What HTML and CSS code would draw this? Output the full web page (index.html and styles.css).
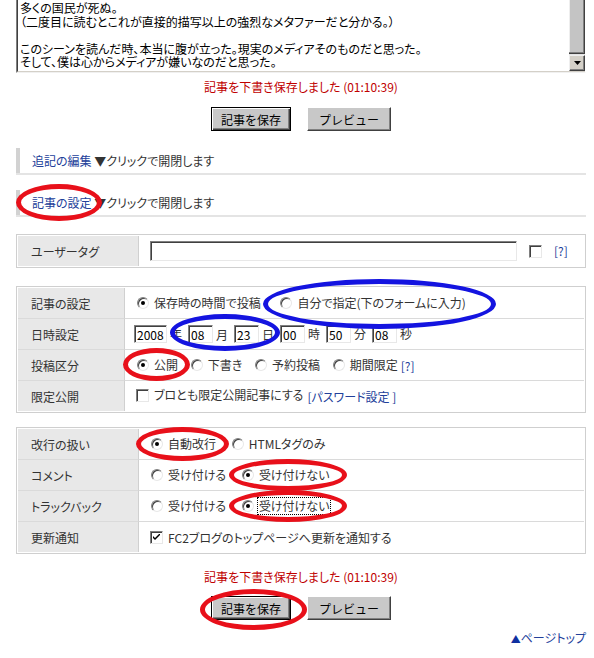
FILE: index.html
```html
<!DOCTYPE html>
<html lang="ja">

<head>
    <meta charset="UTF-8">
    <title>記事の編集</title>
    <link rel="stylesheet" href="styles.css">
</head>

<body>
    <div class="page">
        <!-- 本文エリア（スクロール済み） -->
        <div class="editor">
            <div class="editor-body">
                多くの国民が死ぬ。<br>
                （二度目に読むとこれが直接的描写以上の強烈なメタファーだと分かる。）<br>
                <br>
                このシーンを読んだ時、本当に腹が立った。現実のメディアそのものだと思った。<br>
                そして、僕は心からメディアが嫌いなのだと思った。
            </div>
            <div class="scrollbar">
                <div class="scroll-thumb"></div>
                <div class="scroll-down">
                    <svg width="7" height="4" viewBox="0 0 7 4"><path d="M0 0h7L3.5 4z" fill="#000"/></svg>
                </div>
            </div>
        </div>

        <p class="notice">記事を下書き保存しました (01:10:39)</p>
        <div class="actions">
            <button class="btn btn-default">記事を保存</button>
            <button class="btn btn-preview">プレビュー</button>
        </div>

        <!-- 開閉パネル -->
        <div class="fold">
            <div class="fold-title"><a class="link">追記の編集</a> ▼クリックで開閉します</div>
        </div>
        <div class="fold fold-second">
            <div class="fold-title"><span class="mark"><a class="link">記事の設定</a><span class="ring ring-head"></span></span> ▼クリックで開閉します</div>
        </div>

        <!-- ユーザータグ -->
        <table class="form-table">
            <tr>
                <th class="wide">ユーザータグ</th>
                <td>
                    <div class="cell-row">
                        <input class="text-in tag-in" type="text">
                        <span class="check"></span>
                        <a class="link help">[?]</a>
                    </div>
                </td>
            </tr>
        </table>

        <!-- 投稿日時 -->
        <table class="form-table table-date">
            <tr>
                <th class="narrow">記事の設定</th>
                <td>
                    <span class="opt opt-wide"><span class="radio on"></span>保存時の時間で投稿</span>
                    <span class="opt"><span class="radio"></span>自分で指定(下のフォームに入力)<span class="ring ring-blue ring-own"></span></span>
                </td>
            </tr>
            <tr>
                <th class="narrow">日時設定</th>
                <td>
                    <div class="cell-row">
                        <input class="text-in year-in" type="text" value="2008"><span class="unit">年</span>
                        <span class="mark date-mark">
                            <input class="text-in num-in" type="text" value="08"><span class="unit">月</span><input class="text-in num-in" type="text" value="23"><span class="unit unit-last">日</span>
                            <span class="ring ring-blue ring-date"></span>
                        </span>
                        <input class="text-in num-in" type="text" value="00"><span class="unit">時</span>
                        <input class="text-in num-in" type="text" value="50"><span class="unit">分</span>
                        <input class="text-in num-in" type="text" value="08"><span class="unit">秒</span>
                    </div>
                </td>
            </tr>
            <tr>
                <th class="narrow">投稿区分</th>
                <td>
                    <span class="opt opt-tight"><span class="radio on"></span>公開<span class="ring ring-open"></span></span>
                    <span class="opt opt-tight"><span class="radio"></span>下書き</span>
                    <span class="opt opt-tight"><span class="radio"></span>予約投稿</span>
                    <span class="opt opt-last"><span class="radio"></span>期間限定</span><a class="link">[?]</a>
                </td>
            </tr>
            <tr>
                <th class="narrow">限定公開</th>
                <td>
                    <span class="opt"><span class="check"></span>ブロとも限定公開記事にする</span><a class="link pass">[パスワード設定 ]</a>
                </td>
            </tr>
        </table>

        <!-- 公開オプション -->
        <table class="form-table table-opts">
            <tr>
                <th class="wide">改行の扱い</th>
                <td>
                    <span class="opt"><span class="radio on"></span>自動改行<span class="ring ring-br"></span></span>
                    <span class="opt"><span class="radio"></span>HTMLタグのみ</span>
                </td>
            </tr>
            <tr>
                <th class="wide">コメント</th>
                <td>
                    <span class="opt"><span class="radio"></span>受け付ける</span>
                    <span class="opt"><span class="radio on"></span>受け付けない<span class="ring ring-deny"></span></span>
                </td>
            </tr>
            <tr>
                <th class="wide">トラックバック</th>
                <td>
                    <span class="opt"><span class="radio"></span>受け付ける</span>
                    <span class="opt"><span class="radio on"></span><span class="focus">受け付けない</span><span class="ring ring-deny"></span></span>
                </td>
            </tr>
            <tr>
                <th class="wide">更新通知</th>
                <td>
                    <span class="opt"><span class="check on"><svg width="7" height="7" viewBox="0 0 7 7"><path d="M0 2l2 2 5-5v2l-5 5-2-2z" fill="#000"/></svg></span>FC2ブログのトップページへ更新を通知する</span>
                </td>
            </tr>
        </table>

        <p class="notice notice-bottom">記事を下書き保存しました (01:10:39)</p>
        <div class="actions actions-bottom">
            <span class="mark"><button class="btn btn-default">記事を保存</button><span class="ring ring-save"></span></span>
            <button class="btn btn-preview">プレビュー</button>
        </div>

        <div class="pagetop"><a class="link"><span class="tri">▲</span>ページトップ</a></div>
    </div>
</body>

</html>
```

FILE: styles.css
```css
/* 全体 */
body {
    margin: 0;
    font-family: "Noto Sans CJK JP", sans-serif;
    font-size: 12px;
    font-feature-settings: "palt";
    color: #222;
    background: #fff;
}

.page {
    width: 570px;
    margin-left: 16px;
}

.link {
    color: #22409a;
    cursor: pointer;
}

/* 本文のテキストエリア */
.editor {
    display: flex;
    height: 72px;
    border-left: 1px solid #808080;
    border-right: 1px solid #fff;
    border-bottom: 1px solid #f0f0f0;
}

.editor-body {
    flex: 1;
    border-left: 1px solid #404040;
    border-bottom: 1px solid #d4d0c8;
    padding: 1px 0 0 2px;
    line-height: 13.5px;
    color: #000;
    white-space: nowrap;
    overflow: hidden;
}

.scrollbar {
    width: 16px;
    display: flex;
    flex-direction: column;
    background: #e4e4e4;
    border-bottom: 1px solid #d4d0c8;
}

.scroll-thumb {
    flex: 1;
    background: #c4c4c4;
    border-right: 1px solid #404040;
    border-bottom: 1px solid #404040;
    box-shadow: inset -1px -1px #808080, inset 1px 0 #eee;
    margin-bottom: 1px;
}

.scroll-down {
    height: 16px;
    box-sizing: border-box;
    background: #d4d0c8;
    border: 1px solid;
    border-color: #eee #404040 #404040 #eee;
    box-shadow: inset -1px -1px #808080;
    display: flex;
    align-items: center;
    justify-content: center;
}

/* 保存メッセージ */
.notice {
    margin: 7px 0 0;
    text-align: center;
    color: #c00000;
    line-height: 14px;
}

.notice-bottom {
    margin-top: 16px;
}

/* ボタン */
.actions {
    display: flex;
    justify-content: center;
    gap: 16px;
    margin-top: 13px;
}

.actions-bottom {
    margin-top: 12px;
}

.btn {
    height: 24px;
    padding: 0;
    font-family: inherit;
    font-size: 12px;
    color: #000;
    background: #c8c8c8;
    border: 1px solid;
    border-color: #fff #404040 #404040 #fff;
    box-shadow: inset -1px -1px #808080;
}

.btn-default {
    width: 80px;
    border: 1px solid #000;
    box-shadow: inset 1px 1px #fff, inset -1px -1px #404040, inset -2px -2px #808080;
}

.btn-preview {
    width: 84px;
}

/* 開閉パネル */
.fold {
    margin-top: 17px;
    border-bottom: 2px solid #e4e4e4;
}

.fold-second {
    margin-top: 15px;
}

.fold-title {
    border-left: 4px solid #d2d2d2;
    padding: 6px 12px;
    line-height: 13px;
    color: #333;
}

/* 設定テーブル */
.form-table {
    width: 100%;
    border: 1px solid #cfcfcf;
    padding: 1px;
    border-spacing: 0;
    margin-top: 17px;
}

.table-date {
    margin-top: 18px;
}

.table-opts {
    margin-top: 14px;
}

.form-table th {
    background: #e8e8e8;
    font-weight: normal;
    text-align: left;
    color: #333;
    padding: 0 0 0 13px;
    border-right: 1px solid #d0d0d0;
    border-bottom: 1px solid #dadada;
}

.form-table th.wide {
    width: 107px;
}

.form-table th.narrow {
    width: 93px;
}

.form-table td {
    height: 30px;
    padding: 0 9px;
    border-bottom: 1px solid #dadada;
    line-height: 14px;
    color: #333;
    white-space: nowrap;
}

.form-table tr:last-child th,
.form-table tr:last-child td {
    border-bottom: none;
}

.cell-row {
    display: flex;
    align-items: center;
}

/* 入力欄 */
.text-in {
    box-sizing: border-box;
    height: 18px;
    padding: 0 2px;
    font-family: inherit;
    font-size: 12px;
    color: #000;
    background: #fff;
    border: 1px solid;
    border-color: #808080 #e8e8e8 #e8e8e8 #808080;
    box-shadow: inset 1px 1px #404040;
    outline: none;
}

.tag-in {
    width: 367px;
    height: 20px;
    margin-left: 2px;
    margin-right: 10px;
}

.year-in {
    width: 33px;
}

.num-in {
    width: 25px;
}

.unit {
    margin: 0 6px 0 3px;
}

.unit-last {
    margin-right: 0;
}

.date-mark {
    display: inline-flex;
    align-items: center;
    margin-right: 6px;
}

.help {
    margin-left: 7px;
}

/* ラジオとチェック */
.opt {
    position: relative;
    display: inline-flex;
    align-items: center;
    margin-right: 10px;
}

.opt-wide {
    margin-right: 14px;
}

.opt-tight {
    margin-right: 7px;
}

.opt-last {
    margin-right: 3px;
}

.radio {
    position: relative;
    box-sizing: border-box;
    width: 12px;
    height: 12px;
    margin: 0 5px 0 3px;
    border-radius: 50%;
    border: 1px solid;
    border-color: #808080 #e8e8e8 #e8e8e8 #808080;
    box-shadow: inset 1px 1px 0 #404040;
    background: #fff;
}

.radio.on::after {
    content: "";
    position: absolute;
    left: 3px;
    top: 3px;
    width: 4px;
    height: 4px;
    border-radius: 50%;
    background: #000;
}

.check {
    box-sizing: border-box;
    width: 13px;
    height: 13px;
    margin: 0 5px 0 2px;
    border: 1px solid;
    border-color: #808080 #e8e8e8 #e8e8e8 #808080;
    box-shadow: inset 1px 1px 0 #404040;
    background: #fff;
    display: inline-flex;
    align-items: center;
    justify-content: center;
}

.pass {
    margin-left: -6px;
}

.focus {
    outline: 1px dotted #000;
    outline-offset: 1px;
}

/* マーカーの丸 */
.mark {
    position: relative;
    display: inline-block;
}

.ring {
    position: absolute;
    border: 5px solid #e8101a;
    border-radius: 50%;
    pointer-events: none;
}

.ring-blue {
    border-color: #1414e0;
}

.ring-head {
    left: -16px;
    right: -10px;
    top: -12px;
    bottom: -12px;
}

.ring-own {
    left: -14px;
    right: -30px;
    top: -17px;
    bottom: -19px;
}

.ring-date {
    left: -18px;
    right: -6px;
    top: -11px;
    bottom: -8px;
}

.ring-open {
    left: -11px;
    right: -12px;
    top: -10px;
    bottom: -9px;
}

.ring-br {
    left: -12px;
    right: -13px;
    top: -10px;
    bottom: -10px;
}

.ring-deny {
    left: -10px;
    right: -18px;
    top: -9px;
    bottom: -9px;
}

.ring-save {
    left: -11px;
    right: -16px;
    top: -7px;
    bottom: -10px;
}

/* ページトップ */
.pagetop {
    text-align: right;
    margin-top: 11px;
    line-height: 14px;
}

.tri {
    color: #1030a0;
    font-size: 10px;
}
```
